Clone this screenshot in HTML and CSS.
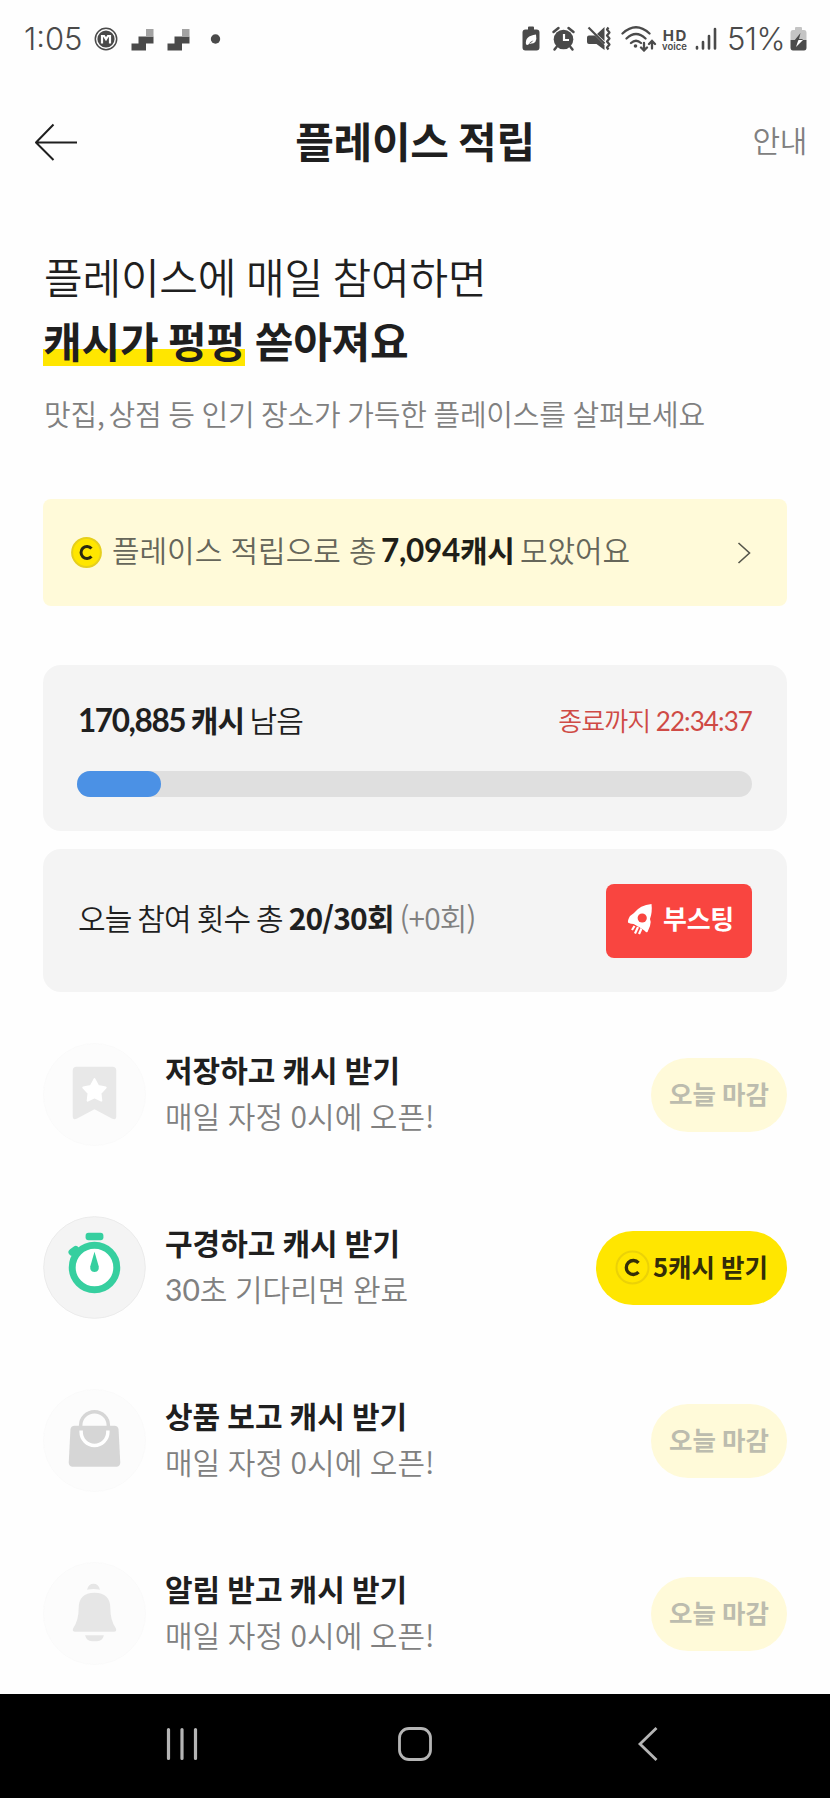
FILE: index.html
```html
<!DOCTYPE html>
<html lang="ko">
<head>
<meta charset="utf-8">
<meta name="viewport" content="width=device-width">
<title>플레이스 적립</title>
<link rel="stylesheet" href="styles.css">
</head>
<body>
<div class="status">
  <span class="clock">1:05</span>
  <svg class="status-left" width="128" height="26" viewBox="0 0 128 26">
    <circle cx="12" cy="13" r="10.7" fill="none" stroke="#4a4a4a" stroke-width="1.5"/>
    <circle cx="12" cy="13" r="8.6" fill="#4a4a4a"/>
    <path d="M8 17.500v-7.500h2l2 3.200 2-3.200h2v7.500" fill="none" stroke="#fff" stroke-width="2.2"/>
    <g id="steps">
      <path d="M44.500 10.500h15V17.500h-7.500V24.500H37.500V17.500h7z" fill="#4a4a4a"/>
      <path d="M52 3h7.500v7.500H52z" fill="#a3a3a3"/>
    </g>
    <use href="#steps" x="36"/>
    <circle cx="121.500" cy="13" r="4.700" fill="#4a4a4a"/>
  </svg>
  <svg class="status-right" width="94" height="26" viewBox="0 0 94 26">
    <g fill="#4a4a4a">
      <path d="M6 3.500V1.500q0-1 1-1h4q1 0 1 1v2h2.500q3 0 3 3v15q0 3-3 3H3.500q-3 0-3-3v-15q0-3 3-3z"/>
      <path d="M4 18.500Q2.500 10 14 8.500q2 10-7 9.300 3-1 4.500-3.500Q8 15.500 6 19z" fill="#fff"/>
      <circle cx="41.500" cy="13.500" r="9.800"/>
      <path d="M31.500 6l5-4M51.500 6l-5-4M34.500 21l-2 2.500M48.500 21l2 2.500" stroke="#4a4a4a" stroke-width="2.500" stroke-linecap="round"/>
      <path d="M42 8v6h5" fill="none" stroke="#fff" stroke-width="2.200"/>
      <path d="M67 9.500h6l9.500 9.500v5l-8-6H67q-2 0-2-2v-4.500q0-2 2-2zM75 8l7.500-7v14z"/>
      <path d="M66.500 1.500l16 16" stroke="#4a4a4a" stroke-width="2.200"/>
      <path d="M86.500 1.500l-1.500 2 2.500 3-2.500 3 2.500 3-2.500 3 2.500 3-2.500 3 1.500 2" fill="none" stroke="#4a4a4a" stroke-width="2.200" stroke-linejoin="round"/>
    </g>
  </svg>
  <svg class="wifi" width="36" height="26" viewBox="0 0 36 26">
    <g fill="none" stroke="#4a4a4a" stroke-width="2.300" stroke-linecap="round">
      <path d="M1.500 7.500Q15-5 28.500 7.500M5.500 12.500q9.500-9 19 0M10 17q5-4.500 10 0"/>
      <path d="M23 17v7M20 21.500l3 3 3-3M31 22.500v-7M28 18l3-3 3 3"/>
    </g>
    <circle cx="14.500" cy="20" r="1.800" fill="#4a4a4a"/>
  </svg>
  <div class="hd"><span class="hd-top">HD</span><span class="hd-low">voice</span></div>
  <svg class="signal" width="22" height="24" viewBox="0 0 22 24">
    <path d="M2 20v1.500M8 15v6.500M14 9v12.500M20 2v19.500" stroke="#4a4a4a" stroke-width="2.600" stroke-linecap="round"/>
  </svg>
  <span class="percent">51%</span>
  <svg class="battery" width="17" height="26" viewBox="0 0 17 26">
    <path d="M5 4V2q0-1 1-1h5q1 0 1 1v2h2q2.500 0 2.500 3v7H.500V7q0-3 2.500-3z" fill="#c4c4c4"/>
    <path d="M.500 14h16v7.500q0 3-2.500 3H3q-2.500 0-2.500-3z" fill="#4a4a4a"/>
    <path d="M10.500 7L4 15h4l-2 6 7-8H9z" fill="#4a4a4a"/>
    <path d="M8.500 14H13l-7 7 2-6z" fill="#fff"/>
  </svg>
</div>

<header class="header">
  <svg class="back" width="46" height="40" viewBox="0 0 46 40">
    <path d="M19.500 2.500L2 20.500l17.500 17.500M2 20.500h41" fill="none" stroke="#1f1f1f" stroke-width="2" stroke-linejoin="round"/>
  </svg>
  <h1 class="title">플레이스 적립</h1>
  <a class="guide">안내</a>
</header>

<main class="main">
  <section class="intro">
    <p class="lead">플레이스에 매일 참여하면</p>
    <p class="lead lead-bold"><mark class="mark">캐시가 펑펑</mark> 쏟아져요</p>
    <p class="desc">맛집<span class="comma">,</span> 상점 등 인기 장소가 가득한 플레이스를 살펴보세요</p>
  </section>

  <section class="banner">
    <svg class="coin" width="31" height="31" viewBox="0 0 31 31">
      <circle cx="15.500" cy="15.500" r="14.400" fill="#ffe600" stroke="#e6cf1d" stroke-width="2"/>
      <path d="M20.500 11.500a6 6 0 1 0 0 8" fill="none" stroke="#2b2910" stroke-width="3"/>
    </svg>
    <p class="banner-text">플레이스 적립으로 총 <b class="sum"><span class="lato">7,094</span>캐시</b> 모았어요</p>
    <svg class="chevron" width="14" height="22" viewBox="0 0 14 22">
      <path d="M1.500 1l11 10-11 10" fill="none" stroke="#55554a" stroke-width="1.600"/>
    </svg>
  </section>

  <section class="card pool">
    <div class="pool-row">
      <p class="remain"><b><span class="lato">170,885</span> 캐시</b> 남음</p>
      <p class="timer">종료까지 <span class="time">22:34:37</span></p>
    </div>
    <div class="track"><div class="fill" style="width:12.5%"></div></div>
  </section>

  <section class="card count">
    <p class="count-text">오늘 참여 횟수 총 <b>20/30회</b> <span class="plus">(+0회)</span></p>
    <button class="boost">
      <svg width="26" height="32" viewBox="0 0 26 32">
        <path d="M24.500 1q1 8-1.500 15 1.500 3 0 7l-2.500 6q-1.500 1-2.500-1-5-3.500-12-7-2 1-5-1.500Q.500 17 3 13l4-3Q13 2 24.500 1z" fill="#fff"/>
        <circle cx="15.200" cy="15" r="4.600" fill="#f94540"/>
        <path d="M2 20.500l4.500.500 9.500 5.500 1 3.500-3 2H2z" fill="#f94540"/>
        <path d="M7.500 23L5 27M11 24L8 30.500M14.500 25.500L12 31" stroke="#fff" stroke-width="2.200" fill="none"/>
      </svg>
      <span class="boost-label">부스팅</span>
    </button>
  </section>

  <ul class="list">
    <li class="item">
      <svg class="icon" width="103" height="103" viewBox="0 0 104 104">
        <circle cx="52" cy="52" r="51.500" fill="#fcfcfc" stroke="#fafafa"/>
        <path d="M34 24h36q4 0 4 4v46q0 4-4 2.500L52 67 34 76.500q-4 1.500-4-2.500V28q0-4 4-4z" fill="#e8e8e8"/>
        <path d="M52 36.500l3.700 7 7.600 1.500-5.300 5.700.9 7.500-6.900-3.200-6.900 3.200.9-7.500-5.300-5.700 7.600-1.500z" fill="#fff" stroke="#fff" stroke-width="2" stroke-linejoin="round"/>
      </svg>
      <div class="copy"><p class="name">저장하고 캐시 받기</p><p class="note">매일 자정 0시에 오픈!</p></div>
      <span class="pill">오늘 마감</span>
    </li>
    <li class="item">
      <svg class="icon" width="103" height="103" viewBox="0 0 104 104">
        <circle cx="52" cy="52" r="51.300" fill="#f4f4f4" stroke="#ebebeb"/>
        <rect x="43" y="17" width="18" height="7.500" rx="3" fill="#36cf9f"/>
        <path d="M29.500 36.500l3.500-2.500" stroke="#36cf9f" stroke-width="7.500" stroke-linecap="round"/>
        <circle cx="52" cy="52" r="22.500" fill="#fff" stroke="#36cf9f" stroke-width="7"/>
        <path d="M52 36l4.300 15q.500 5.500-4.300 5.500T47.700 51z" fill="#36cf9f"/>
      </svg>
      <div class="copy"><p class="name">구경하고 캐시 받기</p><p class="note"><span class="time">30</span>초 기다리면 완료</p></div>
      <span class="pill pill-on">
        <svg width="35" height="35" viewBox="0 0 35 35">
          <circle cx="17.500" cy="17.500" r="16" fill="none" stroke="#ebd207" stroke-width="2"/>
          <path d="M23.500 12.800a7 7 0 1 0 0 9.400" fill="none" stroke="#332d08" stroke-width="3.300"/>
        </svg>
        <span>5캐시 받기</span>
      </span>
    </li>
    <li class="item">
      <svg class="icon" width="103" height="103" viewBox="0 0 104 104">
        <circle cx="52" cy="52" r="51.500" fill="#fcfcfc" stroke="#fafafa"/>
        <path d="M38 40v-3a14 14 0 0 1 28 0v3" fill="none" stroke="#d6d6d6" stroke-width="3.500"/>
        <path d="M32 37h40q4 0 4.300 4L78 74q0 4.500-4 4.500H30q-4 0-4-4.500l1.700-33q.300-4 4.300-4z" fill="#d6d6d6"/>
        <path d="M38.500 42v1.500a13.500 13.500 0 0 0 27 0V42" fill="none" stroke="#fff" stroke-width="3.500"/>
      </svg>
      <div class="copy"><p class="name">상품 보고 캐시 받기</p><p class="note">매일 자정 0시에 오픈!</p></div>
      <span class="pill">오늘 마감</span>
    </li>
    <li class="item">
      <svg class="icon" width="103" height="103" viewBox="0 0 104 104">
        <circle cx="52" cy="52" r="51.500" fill="#fcfcfc" stroke="#fafafa"/>
        <path d="M44.500 28q1.500-6 6.500-6t6.500 6q-6.500-1.500-13 0zM36 47q0-16 16-16t16 16q0 12 5.500 20 1.500 3.500-2 3.500h-39q-3.500 0-2-3.500Q36 59 36 47zM42.500 74h19q-1.500 6-7 6h-5q-5.500 0-7-6z" fill="#e6e6e6"/>
      </svg>
      <div class="copy"><p class="name">알림 받고 캐시 받기</p><p class="note">매일 자정 0시에 오픈!</p></div>
      <span class="pill">오늘 마감</span>
    </li>
  </ul>
</main>

<nav class="nav">
  <svg width="34" height="36" viewBox="0 0 34 36"><path d="M3.500 3.500v29M17 3.500v29M30.500 3.500v29" stroke="#b5b5b5" stroke-width="3.200" stroke-linecap="round"/></svg>
  <svg class="home" width="36" height="36" viewBox="0 0 36 36"><rect x="2.500" y="2.500" width="31" height="31" rx="9.500" fill="none" stroke="#b5b5b5" stroke-width="2.800"/></svg>
  <svg width="22" height="36" viewBox="0 0 22 36"><path d="M19.500 2L3 18l16.500 16" fill="none" stroke="#b5b5b5" stroke-width="2.800"/></svg>
</nav>
</body>
</html>
```
FILE: styles.css
```css
* { box-sizing: border-box; margin: 0; padding: 0; }
body {
  width: 830px;
  height: 1798px;
  display: flex;
  flex-direction: column;
  background: #fefefe;
  color: #1f1f1f;
  font-family: "Noto Sans CJK KR", sans-serif;
  font-weight: 350;
  white-space: nowrap;
  overflow: hidden;
}
svg { display: block; flex: none; }
b { font-weight: 700; }

.status {
  height: 78px;
  padding: 0 23px 0 24px;
  display: flex;
  align-items: center;
  color: #4a4a4a;
  font-family: Inter, sans-serif;
}
.clock, .percent { font-size: 31px; font-weight: 300; line-height: 40px; }
.clock { width: 70px; }
.status-right { margin-left: auto; }
.wifi { margin-left: 5px; }
.hd { width: 27px; margin-left: 4px; padding-top: 2px; display: flex; flex-direction: column; align-items: center; }
.hd-top { font-size: 15px; line-height: 13px; font-weight: 700; letter-spacing: 1.500px; margin-right: -1.500px; }
.hd-low { font-size: 9.500px; line-height: 10px; font-weight: 600; }
.signal { margin-left: 7px; }
.percent { width: 61px; margin-left: 10px; letter-spacing: -0.6px; }
.battery { margin-left: 2px; }

.header {
  height: 124px;
  padding: 0 23px 0 34px;
  display: grid;
  grid-template-columns: 100px 1fr 111px;
  align-items: center;
}
.back { margin-top: 4px; }
.title { margin-top: -1px; font-size: 42px; line-height: 60px; font-weight: 700; text-align: center; letter-spacing: -0.3px; word-spacing: -2px; }
.guide { margin-top: -2px; font-size: 30px; line-height: 42px; color: #808080; text-align: right; letter-spacing: -0.3px; }

.main { flex: 1; padding: 42px 43px 0; }
.lead { padding-left: 1px; font-size: 42px; line-height: 64px; letter-spacing: -0.2px; word-spacing: -1.800px; }
.lead-bold { padding-left: 0; font-weight: 700; }
.mark { color: inherit; background: linear-gradient(#ffe600, #ffe600) 0 40px / 100% 17px no-repeat; }
.desc { margin-top: 20px; padding-left: 1px; font-size: 29px; line-height: 42px; color: #808080; letter-spacing: -0.2px; word-spacing: -1.200px; }
.comma { letter-spacing: -3px; }

.banner {
  height: 107px;
  margin-top: 65px;
  padding: 0 36px 0 28px;
  display: flex;
  align-items: center;
  border-radius: 8px;
  background: #fffad9;
}
.banner-text { margin: -8px 0 0 10px; font-size: 30px; line-height: 42px; color: #66665a; letter-spacing: -0.05px; }
.sum { margin: 0 -3px 0 -4px; color: #1f1f18; letter-spacing: -0.3px; }
.lato { font-family: Lato, sans-serif; font-size: 1.05em; line-height: 1; }
.time { font-family: Lato, sans-serif; font-weight: 400; line-height: 1; }
.chevron { margin-left: auto; }

.card { border-radius: 18px; background: #f4f4f4; padding: 0 35px 0 34px; }
.pool { height: 166px; margin-top: 59px; padding-top: 33px; }
.pool-row { display: flex; justify-content: space-between; align-items: center; height: 42px; }
.remain { padding-left: 1px; font-size: 30px; line-height: 42px; letter-spacing: -0.9px; word-spacing: -2px; }
.remain .lato { letter-spacing: -1.400px; }
.timer { margin-top: 2px; font-size: 26px; line-height: 42px; color: #cf4a45; letter-spacing: -0.9px; word-spacing: -1px; }
.track { height: 26px; margin-top: 31px; border-radius: 13px; background: #dfdfdf; }
.fill { height: 26px; border-radius: 13px; background: #4b91e5; }

.count { height: 143px; margin-top: 18px; display: flex; align-items: center; justify-content: space-between; }
.count-text { margin-top: -7px; padding-left: 1px; font-size: 30px; line-height: 42px; letter-spacing: -0.85px; word-spacing: -1.700px; }
.plus { color: #808080; }
.boost {
  width: 146px;
  height: 74px;
  display: flex;
  align-items: center;
  justify-content: center;
  gap: 10px;
  border: 0;
  border-radius: 8px;
  background: #f94540;
  color: #fff;
  font: 700 26px/38px "Noto Sans CJK KR", sans-serif;
}
.boost svg { margin: -3px 0 0 3px; }
.boost-label { margin-top: -5px; letter-spacing: -0.2px; }

.list { list-style: none; margin-top: 51px; display: flex; flex-direction: column; gap: 70px; }
.item { height: 103px; display: flex; align-items: center; }
.copy { margin: -5px 0 0 19px; }
.name { font-size: 30px; line-height: 46px; font-weight: 700; word-spacing: -1.300px; }
.note { font-size: 30px; line-height: 46px; color: #808080; word-spacing: -0.8px; }
.pill {
  width: 136px;
  height: 74px;
  margin-left: auto;
  padding-bottom: 3px;
  display: flex;
  align-items: center;
  justify-content: center;
  border-radius: 37px;
  background: #fffad9;
  color: #bcbcae;
  font-size: 25.500px;
  line-height: 38px;
  font-weight: 700;
  word-spacing: -1px;
}
.pill-on { width: 191px; gap: 3px; background: #ffe600; color: #332d08; }
.pill-on svg { margin-top: 2px; }

.nav { height: 104px; display: flex; align-items: center; padding: 0 0 5px 165px; background: #000; }
.home { margin: 0 204px 0 198px; }
```
